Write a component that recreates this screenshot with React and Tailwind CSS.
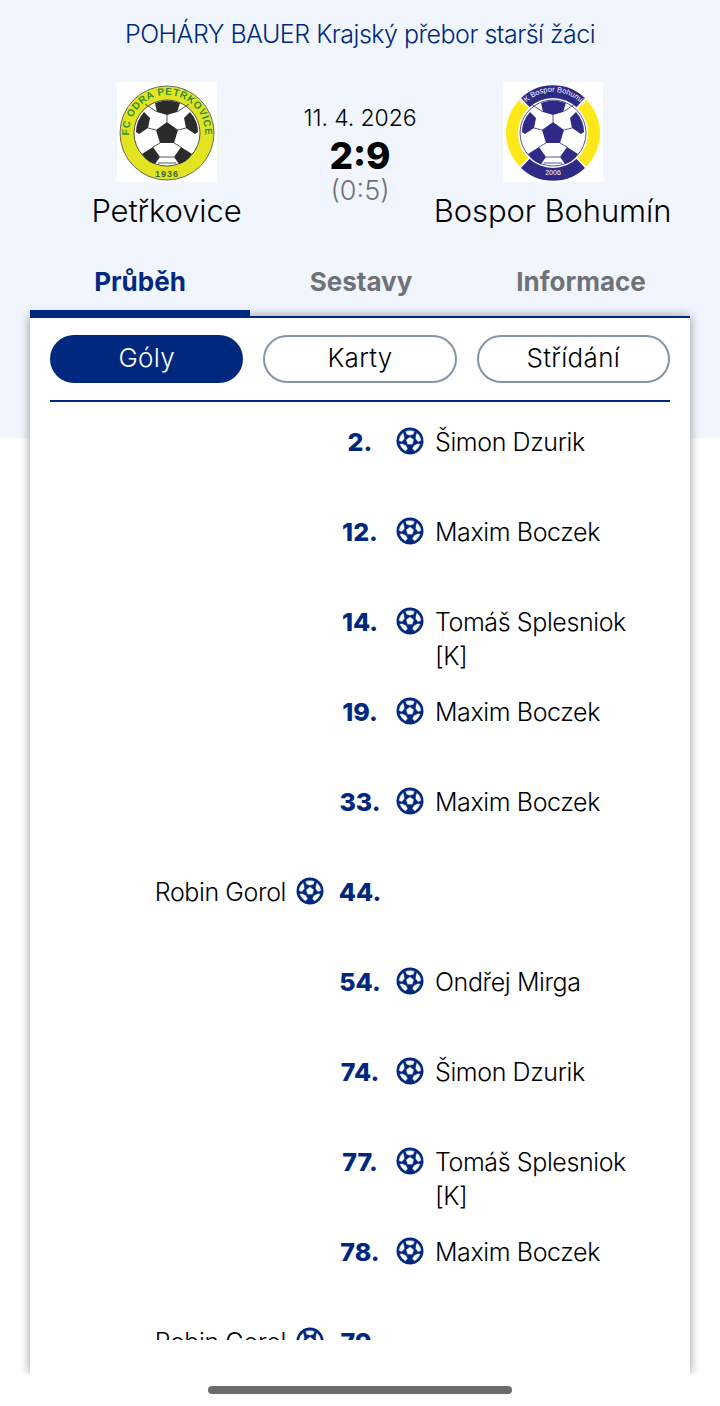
import React from "react";

const NAVY = "#00287f";

const goals = [
  { min: "2.", side: "r", name: "Šimon Dzurik" },
  { min: "12.", side: "r", name: "Maxim Boczek" },
  { min: "14.", side: "r", name: "Tomáš Splesniok [K]" },
  { min: "19.", side: "r", name: "Maxim Boczek" },
  { min: "33.", side: "r", name: "Maxim Boczek" },
  { min: "44.", side: "l", name: "Robin Gorol" },
  { min: "54.", side: "r", name: "Ondřej Mirga" },
  { min: "74.", side: "r", name: "Šimon Dzurik" },
  { min: "77.", side: "r", name: "Tomáš Splesniok [K]" },
  { min: "78.", side: "r", name: "Maxim Boczek" },
  { min: "79.", side: "l", name: "Robin Gorol" },
];

// small goal icon, navy disc with white panels
const BallIcon = () => (
  <svg width="28" height="28" viewBox="0 0 28 28" className="mt-[2px] shrink-0">
    <circle cx="14" cy="14" r="13.5" fill={NAVY} />
    <g fill="#fff" stroke={NAVY} strokeWidth="0.4">
      <polygon points="14,9.8 18,12.7 16.5,17.4 11.5,17.4 10,12.7" />
      <path d="M9.4 4.3 Q14 2.3 18.6 4.3 L17.6 7.6 L14 8.4 L10.4 7.6 Z" />
      <path d="M20.8 5.4 Q24.6 8.6 25.3 13.4 L22.2 15 L19.4 11.8 L19.8 8.2 Z" />
      <path d="M7.2 5.4 Q3.4 8.6 2.7 13.4 L5.8 15 L8.6 11.8 L8.2 8.2 Z" />
      <path d="M24.6 17 Q22.8 21.8 18.8 24.2 L16.2 21.8 L17.8 18.6 L21.8 16.6 Z" />
      <path d="M3.4 17 Q5.2 21.8 9.2 24.2 L11.8 21.8 L10.2 18.6 L6.2 16.6 Z" />
    </g>
  </svg>
);

// ball artwork shared by both crests
const BallArt = ({ dark }) => (
  <g>
    <circle cx="50" cy="51" r="33" fill="#fff" stroke={dark} strokeWidth="0.8" />
    <polygon points="50,40 61,48 57,61 43,61 39,48" fill={dark} />
    <path d="M38 21 Q50 16 63 21 L60 30 L50 33 L40 30 Z" fill={dark} />
    <path d="M19 50 Q19 39 27 30 L33 36 L31 46 L22 52 Z" fill={dark} />
    <path d="M81 50 Q81 39 73 30 L67 36 L69 46 L78 52 Z" fill={dark} />
    <path d="M25 72 L36 65 L43 75 L38 82 Q30 80 25 72 Z" fill={dark} />
    <path d="M75 72 L64 65 L57 75 L62 82 Q70 80 75 72 Z" fill={dark} />
    <g stroke={dark} strokeWidth="0.8" fill="none">
      <path d="M50 33V40M40 30L28 22M60 30L72 22M39 48L31 46M61 48L69 46M43 61L36 65M57 61L64 65M43 75H57M41 81H59" />
    </g>
  </g>
);

const OdraCrest = () => (
  <svg width="100" height="100" viewBox="0 0 100 100" className="bg-white">
    <defs>
      <path id="odraTop" d="M15.1 66 A38 38 0 1 1 84.9 66" />
    </defs>
    <circle cx="50" cy="51" r="47" fill="#e2e422" stroke="#6b6b6b" strokeWidth="1" />
    <BallArt dark="#2b2b2b" />
    <text fontFamily="Liberation Sans, sans-serif" fontSize="10" fontWeight="700" fill="#2f8f3a" letterSpacing="0.6">
      <textPath href="#odraTop" startOffset="50%" textAnchor="middle">FC ODRA PETŘKOVICE</textPath>
    </text>
    <text x="50" y="95" textAnchor="middle" fontFamily="Liberation Sans, sans-serif" fontSize="9" fontWeight="700" fill="#2f6f3a" letterSpacing="1">1936</text>
  </svg>
);

const BosporCrest = () => (
  <svg width="100" height="100" viewBox="0 0 100 100" className="bg-white">
    <defs>
      <path id="bosporTop" d="M17 28 A39 39 0 0 1 83 28" />
    </defs>
    <circle cx="50" cy="51" r="47" fill="#ffe81a" />
    <path d="M17 16 A47 47 0 0 1 83 16 L70 30 A34 34 0 0 0 30 30 Z" fill="#2e2a86" stroke="#fff" strokeWidth="1.5" />
    <path d="M17 86 A47 47 0 0 0 83 86 L70 72 A34 34 0 0 1 30 72 Z" fill="#2e2a86" stroke="#fff" strokeWidth="1.5" />
    <circle cx="50" cy="51" r="35" fill="#fff" />
    <BallArt dark="#2e2a86" />
    <text fontFamily="Liberation Sans, sans-serif" fontSize="7.5" fill="#fff">
      <textPath href="#bosporTop" startOffset="50%" textAnchor="middle">FK Bospor Bohumín</textPath>
    </text>
    <text x="50" y="93" textAnchor="middle" fontFamily="Liberation Sans, sans-serif" fontSize="7" fill="#fff">2006</text>
  </svg>
);

const GoalRow = ({ goal }) => (
  <div className="grid h-[90px] grid-cols-[280px_60px_280px] text-[25px] font-[350] leading-[34px] text-black">
    <div className="flex items-start justify-end gap-[10px] pr-[6px] tracking-[-0.4px]">
      {goal.side === "l" && (
        <>
          <span>{goal.name}</span>
          <BallIcon />
        </>
      )}
    </div>
    <div className="text-center font-extrabold text-[#00287f]">{goal.min}</div>
    <div className="flex items-start gap-[11px] pl-[6px] pr-[30px] tracking-[-0.4px]">
      {goal.side === "r" && (
        <>
          <BallIcon />
          <span>{goal.name}</span>
        </>
      )}
    </div>
  </div>
);

export default function App() {
  return (
    <div
      className="h-[1406px] w-[720px] overflow-hidden bg-[linear-gradient(#f1f6fe_438px,#fff_438px)]"
      style={{ fontFamily: "Inter, sans-serif" }}
    >
      <div className="pt-[17px] text-center text-[25px] font-[350] leading-[34px] tracking-[-0.5px] text-[#00287f]">
        POHÁRY BAUER Krajský přebor starší žáci
      </div>

      <div className="mt-[31px] grid h-[150px] grid-cols-[333px_54px_331px]">
        <div className="flex flex-col items-center">
          <OdraCrest />
          <div className="mt-[11px] text-[31px] font-[350] leading-[36px] tracking-[-0.1px] text-black">Petřkovice</div>
        </div>
        <div className="flex flex-col items-center whitespace-nowrap pt-[21px]">
          <div className="text-[23px] font-light leading-[30px] tracking-[-0.1px] text-black">11. 4. 2026</div>
          <div className="pt-[2px] text-[37px] font-extrabold leading-[42px] text-black">2:9</div>
          <div className="text-[27px] font-light leading-[27px] text-[#6f7278]">(0:5)</div>
        </div>
        <div className="flex flex-col items-center whitespace-nowrap">
          <BosporCrest />
          <div className="mt-[11px] text-[31px] font-[350] leading-[36px] tracking-[-0.1px] text-black">Bospor Bohumín</div>
        </div>
      </div>

      <div className="mx-[30px] mt-[18px] grid h-[68px] grid-cols-3 text-center text-[26px] font-bold leading-[34px]">
        <div className="border-b-[8px] border-[#00287f] pt-[15px] text-[#00287f]">Průběh</div>
        <div className="pl-[2px] pt-[15px] text-[#6f7278]">Sestavy</div>
        <div className="pl-[2px] pt-[15px] text-[#6f7278]">Informace</div>
      </div>

      <div className="mx-[30px] -mt-[2px] h-[1058px] border-t-2 border-[#00287f] bg-white px-[20px] pt-[17px] shadow-[0_0_10px_rgba(0,0,0,0.4)]">
        <div className="grid grid-cols-3 gap-[20px] text-[26px] font-[350] tracking-[0.3px]">
          <div className="flex h-[48px] items-center justify-center rounded-full bg-[#00287f] pb-[3px] text-white">Góly</div>
          <div className="flex h-[48px] items-center justify-center rounded-full border-2 border-[#8593ab] bg-white pb-[3px] text-black">Karty</div>
          <div className="flex h-[48px] items-center justify-center rounded-full border-2 border-[#8593ab] bg-white pb-[3px] text-black">Střídání</div>
        </div>
        <div className="mt-[17px] h-[940px] overflow-hidden border-t-2 border-[#00287f] pt-[23px]">
          {goals.map((g, i) => (
            <GoalRow key={i} goal={g} />
          ))}
        </div>
      </div>

      <div className="relative flex h-[32px] justify-center bg-white pt-[12px]">
        <div className="h-[8px] w-[304px] rounded-full bg-[#6b6b6b]" />
      </div>
    </div>
  );
}
